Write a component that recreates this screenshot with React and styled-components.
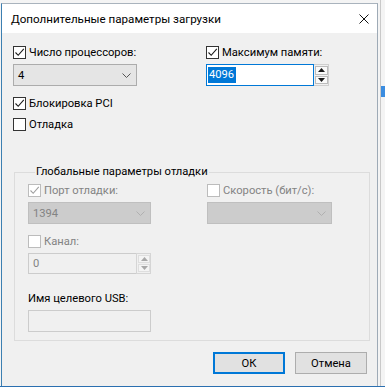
import styled, { createGlobalStyle } from 'styled-components';

const GlobalStyle = createGlobalStyle`
  html, body {
    margin: 0;
    padding: 0;
    background: #f4f4f4;
  }
  body {
    font-family: Roboto, "Noto Sans", sans-serif;
    font-size: 11.2px;
    color: #000;
  }
`;

const Page = styled.div`
  width: 385px;
  height: 387px;
  display: flex;
  overflow: hidden;
  background: #f4f4f4;
  border-bottom: 1px solid #2b6fb0;
  box-sizing: border-box;
`;

const Dialog = styled.div`
  width: 377px;
  margin-top: 3px;
  margin-left: 1px;
  display: flex;
  flex-direction: column;
  border-left: 1px solid #3c7fb1;
  border-right: 1px solid #9eaab6;
  border-top: 1px solid #a9b3bd;
  box-sizing: border-box;
`;

const TitleBar = styled.div`
  height: 29px;
  flex-shrink: 0;
  background: #fff;
  display: flex;
  align-items: center;
  justify-content: space-between;
  padding: 0 8px 0 9px;
  font-size: 11.6px;
`;

const Body = styled.div`
  flex: 1;
  background: #f0f0f0;
  padding: 13px 10px 0 11px;
  display: flex;
  flex-direction: column;
`;

const TopGrid = styled.div`
  display: grid;
  grid-template-columns: 193px 1fr;
`;

const Column = styled.div`
  display: flex;
  flex-direction: column;
  gap: 5px;
`;

const CheckRow = styled.label`
  display: flex;
  align-items: center;
  height: 13px;
  gap: 3px;
  white-space: nowrap;
  color: ${(p) => (p.$disabled ? '#838383' : '#000')};
  margin-top: ${(p) => p.$top || 0}px;
`;

const Box = styled.span`
  width: 13px;
  height: 13px;
  box-sizing: border-box;
  flex-shrink: 0;
  background: #fff;
  border: 1px solid ${(p) => (p.$disabled ? '#bcbcbc' : '#333')};
  display: flex;
  align-items: center;
  justify-content: center;
`;

const Select = styled.div`
  width: ${(p) => p.$w}px;
  height: 22px;
  box-sizing: border-box;
  display: flex;
  align-items: center;
  justify-content: space-between;
  padding: 0 5px 0 4px;
  background: ${(p) => (p.$disabled ? '#cccccc' : '#e5e5e5')};
  border: 1px solid ${(p) => (p.$disabled ? '#bfbfbf' : '#acacac')};
  color: ${(p) => (p.$disabled ? '#838383' : '#000')};
`;

const SpinWrap = styled.div`
  display: flex;
  width: ${(p) => p.$w}px;
  height: ${(p) => p.$h}px;
`;

const Edit = styled.div`
  flex: 1;
  box-sizing: border-box;
  display: flex;
  align-items: center;
  padding-left: 1px;
  background: ${(p) => (p.$disabled ? '#f0f0f0' : '#fff')};
  border: 1px solid ${(p) => (p.$focused ? '#0078d7' : '#cccccc')};
  border-right: ${(p) => (p.$focused ? '1px solid #0078d7' : 'none')};
  color: ${(p) => (p.$disabled ? '#838383' : '#000')};
`;

const Selected = styled.span`
  background: #0078d7;
  color: #fff;
  padding: 0 2px 0 1px;
  line-height: 16px;
`;

const Spinner = styled.div`
  width: 15px;
  display: flex;
  flex-direction: column;
  box-sizing: border-box;
  border: 1px solid ${(p) => (p.$disabled ? '#d5d5d5' : '#cfcfcf')};
  border-left: ${(p) => (p.$disabled ? '1px solid #d5d5d5' : 'none')};
  background: #f0f0f0;
  padding: 1px 0 1px 1px;
  gap: 1px;
`;

const SpinBtn = styled.div`
  flex: 1;
  display: flex;
  align-items: center;
  justify-content: center;
  background: ${(p) => (p.$disabled ? '#f4f4f4' : '#fafafa')};
  border: 1px solid ${(p) => (p.$disabled ? '#dedede' : '#bcbcbc')};
`;

const Group = styled.fieldset`
  margin: 33px 0 0 1px;
  padding: 4px 0 8px 13px;
  width: 356px;
  box-sizing: border-box;
  border: 1px solid #dcdcdc;
`;

const Legend = styled.legend`
  padding: 0 1px;
  margin-left: 7px;
  line-height: 16px;
`;

const GroupGrid = styled.div`
  display: grid;
  grid-template-columns: 179px 1fr;
  align-items: start;
`;

const Label = styled.div`
  height: 13px;
  display: flex;
  align-items: center;
  margin-top: ${(p) => p.$top || 0}px;
`;

const TextBox = styled.div`
  width: 123px;
  height: 22px;
  box-sizing: border-box;
  border: 1px solid #cccccc;
  background: #f0f0f0;
`;

const Buttons = styled.div`
  display: flex;
  justify-content: flex-end;
  gap: 10px;
  margin-top: 11px;
`;

const Button = styled.div`
  width: 72px;
  height: 22px;
  box-sizing: border-box;
  display: flex;
  align-items: center;
  justify-content: center;
  background: #e1e1e1;
  border: ${(p) => (p.$default ? '2px solid #0078d7' : '1px solid #adadad')};
`;

const BackStrip = styled.div`
  flex: 1;
  display: flex;
  flex-direction: column;
  border-left: 1px solid #c9c9c9;
  margin-left: 2px;
  padding-top: 86px;
`;

const BackCell = styled.div`
  height: 11px;
  background: #3b8de0;
`;

function Check({ checked, disabled }) {
  const c = disabled ? '#a0a0a0' : '#1a1a1a';
  return (
    <Box $disabled={disabled}>
      {checked && (
        <svg width="11" height="11" viewBox="0 0 11 11">
          <path d="M1.5 5.5 L4.2 8.3 L9.8 1.8" fill="none" stroke={c} strokeWidth="1.1" />
        </svg>
      )}
    </Box>
  );
}

function Chevron({ disabled }) {
  return (
    <svg width="9" height="5" viewBox="0 0 9 5">
      <path d="M0.5 0.5 L4.5 4.5 L8.5 0.5" fill="none" stroke={disabled ? '#b0b0b0' : '#555'} strokeWidth="1" />
    </svg>
  );
}

function Arrow({ up, disabled }) {
  return (
    <svg width="7" height="4" viewBox="0 0 7 4">
      <path d={up ? 'M0 4 L3.5 0 L7 4 Z' : 'M0 0 L3.5 4 L7 0 Z'} fill={disabled ? '#a8a8a8' : '#1a1a1a'} />
    </svg>
  );
}

function Spin({ w, h, disabled, focused, children }) {
  return (
    <SpinWrap $w={w} $h={h}>
      <Edit $disabled={disabled} $focused={focused}>{children}</Edit>
      <Spinner $disabled={disabled}>
        <SpinBtn $disabled={disabled}><Arrow up disabled={disabled} /></SpinBtn>
        <SpinBtn $disabled={disabled}><Arrow disabled={disabled} /></SpinBtn>
      </Spinner>
    </SpinWrap>
  );
}

export default function App() {
  return (
    <>
      <GlobalStyle />
      <Page>
        <Dialog>
          <TitleBar>
            <span>Дополнительные параметры загрузки</span>
            <svg width="10" height="10" viewBox="0 0 10 10">
              <path d="M0.5 0.5 L9.5 9.5 M9.5 0.5 L0.5 9.5" stroke="#111" strokeWidth="1" />
            </svg>
          </TitleBar>
          <Body>
            <TopGrid>
              <Column>
                <CheckRow><Check checked />Число процессоров:</CheckRow>
                <Select $w={124}>
                  <span>4</span>
                  <Chevron />
                </Select>
                <CheckRow $top={6}><Check checked />Блокировка PCI</CheckRow>
                <CheckRow $top={3}><Check />Отладка</CheckRow>
              </Column>
              <Column>
                <CheckRow><Check checked />Максимум памяти:</CheckRow>
                <Spin w={123} h={22} focused>
                  <Selected>4096</Selected>
                </Spin>
              </Column>
            </TopGrid>
            <Group>
              <Legend>Глобальные параметры отладки</Legend>
              <GroupGrid>
                <Column>
                  <CheckRow $disabled><Check checked disabled />Порт отладки:</CheckRow>
                  <Select $w={123} $disabled>
                    <span>1394</span>
                    <Chevron disabled />
                  </Select>
                  <CheckRow $disabled $top={6}><Check disabled />Канал:</CheckRow>
                  <Spin w={123} h={21} disabled>
                    <span style={{ paddingLeft: 3 }}>0</span>
                  </Spin>
                  <Label $top={13}>Имя целевого USB:</Label>
                  <TextBox />
                </Column>
                <Column>
                  <CheckRow $disabled><Check disabled />Скорость (бит/с):</CheckRow>
                  <Select $w={125} $disabled>
                    <span />
                    <Chevron disabled />
                  </Select>
                </Column>
              </GroupGrid>
            </Group>
            <Buttons>
              <Button $default>ОК</Button>
              <Button>Отмена</Button>
            </Buttons>
          </Body>
        </Dialog>
        <BackStrip>
          <BackCell />
        </BackStrip>
      </Page>
    </>
  );
}
